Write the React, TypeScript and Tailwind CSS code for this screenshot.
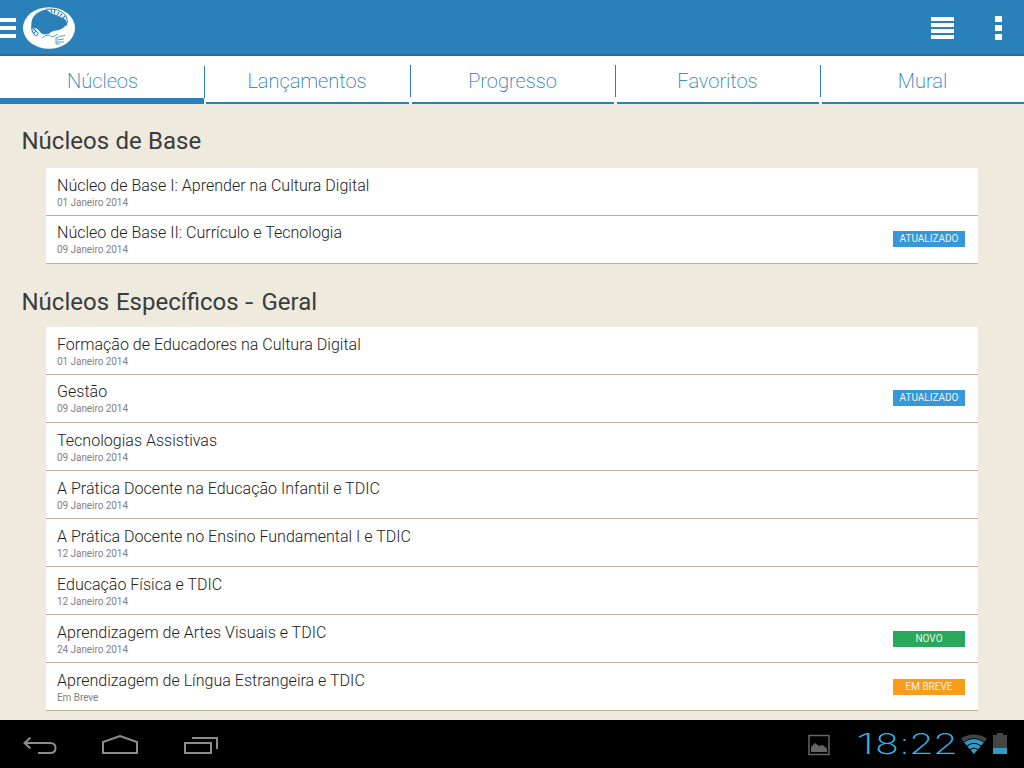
import React from 'react';

type Row = {
  title: string;
  date: string;
  pad?: string;
  badge?: { label: string; style: string };
};

const ATUALIZADO = { label: 'ATUALIZADO', style: 'mt-[15px] bg-[#3498db]' };

const base: Row[] = [
  { title: 'Núcleo de Base I: Aprender na Cultura Digital', date: '01 Janeiro 2014' },
  { title: 'Núcleo de Base II: Currículo e Tecnologia', date: '09 Janeiro 2014', pad: 'pt-[6px]', badge: ATUALIZADO },
];

const geral: Row[] = [
  { title: 'Formação de Educadores na Cultura Digital', date: '01 Janeiro 2014' },
  { title: 'Gestão', date: '09 Janeiro 2014', pad: 'pt-[6px]', badge: ATUALIZADO },
  { title: 'Tecnologias Assistivas', date: '09 Janeiro 2014' },
  { title: 'A Prática Docente na Educação Infantil e TDIC', date: '09 Janeiro 2014' },
  { title: 'A Prática Docente no Ensino Fundamental I e TDIC', date: '12 Janeiro 2014' },
  { title: 'Educação Física e TDIC', date: '12 Janeiro 2014' },
  { title: 'Aprendizagem de Artes Visuais e TDIC', date: '24 Janeiro 2014', badge: { label: 'NOVO', style: 'mt-[16px] bg-[#27a85b]' } },
  { title: 'Aprendizagem de Língua Estrangeira e TDIC', date: 'Em Breve', badge: { label: 'EM BREVE', style: 'mt-[16px] bg-[#f89c1c]' } },
];

const tabs = ['Núcleos', 'Lançamentos', 'Progresso', 'Favoritos', 'Mural'];
const tabWidths = ['w-[204px]', 'w-[203px]', 'w-[202px]', 'w-[202px]', 'w-[202px]'];

function Logo() {
  return (
    <svg className="mt-px ml-[7px] h-[42px] w-[53px]" viewBox="23 7 53 42">
      <ellipse cx="49" cy="28" rx="26" ry="20.800" fill="#fff" />
      <path d="M46 9.500 Q38 11 34 16 Q30.500 21 31.500 28 Q36 27 39.500 31 Q41 34.500 46 34.500 Q49 34 51 32 Q54 30.500 59 30 Q65 28 67 23 Q66 18 60 17 Q57 14.500 53 14 Q49 11.500 46 9.500Z" fill="#2a80b9" />
      <path d="M46 9.300 Q59 7.500 66 16 Q69 21 66 26" fill="none" stroke="#2a80b9" strokeWidth="1" />
      <path d="M51 9.500l1 3M55 10l-1 3.500M59 12l-1.500 3M62 13.500l-2 3M65 16l-2 2M31.500 27l1 5 4 3M33 28l3 3" stroke="#2a80b9" strokeWidth="1.200" fill="none" />
      <circle cx="36" cy="33.500" r="2" fill="#fff" stroke="#2a80b9" />
      <path d="M42 38 Q45 35 49 35 Q51 38 55 36 L58 34 M56 38 Q59 36 65 35.500M57 40 L64 39M56 42 L64 42M56 37.500 L56 44 L60 44" stroke="#2a80b9" strokeWidth=".75" fill="none" />
    </svg>
  );
}

function Section({ heading, rows, headClass }: { heading: React.ReactNode; rows: Row[]; headClass: string }) {
  return (
    <section>
      <h2 className={`pl-[21.500px] text-[24px] leading-[30px] text-[#3a3c3e] ${headClass}`}>{heading}</h2>
      <ul className="ml-[46px] w-[932px] bg-white">
        {rows.map((r) => (
          <li key={r.title} className="flex h-[48px] items-start justify-between border-b border-[#b6b09c] pr-[13px] pl-[11px]">
            <div className={r.pad ?? 'pt-[7px]'}>
              <p className="text-[16px] leading-[22px] font-light tracking-[0.02px] text-[#222]">{r.title}</p>
              <p className="text-[10px] leading-[12px] tracking-[-0.06px] text-[#808284]">{r.date}</p>
            </div>
            {r.badge && (
              <span className={`h-[16px] w-[72px] text-center text-[10px] leading-[15px] text-[#f1f0e4] ${r.badge.style}`}>
                {r.badge.label}
              </span>
            )}
          </li>
        ))}
      </ul>
    </section>
  );
}

export default function App() {
  return (
    <div className="flex h-[768px] w-[1024px] flex-col overflow-hidden bg-[#eeeade] font-['Roboto',sans-serif]">
      <header className="flex h-[56px] shrink-0 items-center border-b-2 border-[#246b9b] bg-[#2a80b9]">
        <div className="mt-[2px] flex w-[16px] flex-col gap-[4px]">
          <i className="h-[4px] bg-white" />
          <i className="h-[4px] bg-white" />
          <i className="h-[4px] bg-white" />
        </div>
        <Logo />
        <div className="mt-[2px] ml-auto flex w-[23px] flex-col gap-[2px]">
          <i className="h-[4px] bg-white" />
          <i className="h-[4px] bg-white" />
          <i className="h-[4px] bg-white" />
          <i className="h-[4px] bg-white" />
        </div>
        <div className="mt-[2px] mr-[22px] ml-[41px] flex w-[7px] flex-col gap-[3px]">
          <i className="h-[6px] bg-white" />
          <i className="h-[6px] bg-white" />
          <i className="h-[6px] bg-white" />
        </div>
      </header>

      <nav className="flex h-[48px] shrink-0 bg-white text-[20px] font-extralight text-[#1675b5]">
        {tabs.map((t, i) => (
          <React.Fragment key={t}>
            {i > 0 && (
              <div className={`flex shrink-0 ${i === 1 ? 'w-[2px] pt-[10px]' : 'w-[3px] pt-[9px] pl-px'}`}>
                <div className="h-[32px] w-px bg-[#2a80b9]" />
              </div>
            )}
            <div className={`flex h-full shrink-0 justify-center border-[#2a80b9] pt-[10px] leading-[30px] ${tabWidths[i]} ${i === 0 ? 'border-b-6 pl-px' : 'border-b-2 pr-px'}`}>
              {t}
            </div>
          </React.Fragment>
        ))}
      </nav>

      <main className="h-[616px] shrink-0 overflow-hidden">
        <Section heading="Núcleos de Base" rows={base} headClass="pt-[22px] pb-[12px] [word-spacing:0.4px]" />
        <Section
          heading={<>Núcleos Específicos <span className="mr-[2.500px] inline-block origin-left scale-x-125">-</span> Geral</>}
          rows={geral}
          headClass="pt-[23px] pb-[10px] [word-spacing:0.9px]"
        />
      </main>

      <footer className="flex h-[48px] shrink-0 items-center bg-black">
        <svg className="h-[48px] w-[240px]" viewBox="0 0 240 48" fill="none" stroke="#8c8c8c" strokeWidth="2">
          <path d="M30.500 17.500 L24.500 23 L30.500 28.500M25 23 H50 Q55.500 23 55.500 28 T50 33 H38" />
          <path d="M103 33 V22 L120 16 L137 22 V33Z" />
          <path d="M185 23h26v10h-26zM192 18h25v11" />
        </svg>
        <svg className="ml-auto h-[48px] w-[234px]" viewBox="790 0 234 48">
          <path d="M809 15.500h20v19h-20z" fill="none" stroke="#666" strokeWidth="1.500" />
          <path d="M811 32v-5l4-4 4 3 4-1 4 4v3z" fill="#666" />
          <g fontFamily="Inter" fontWeight="200" fontSize="28" fill="#33b5e5">
            <text x="856" y="34" textLength="18.500" lengthAdjust="spacingAndGlyphs">1</text>
            <text x="875" y="34" textLength="24" lengthAdjust="spacingAndGlyphs">8</text>
            <text x="900.500" y="34" textLength="8" lengthAdjust="spacingAndGlyphs">:</text>
            <text x="909" y="34" textLength="25" lengthAdjust="spacingAndGlyphs">2</text>
            <text x="933" y="34" textLength="25" lengthAdjust="spacingAndGlyphs">2</text>
          </g>
          <path d="M961 18.500 Q974 10.500 987 18.500 L974 34Z" fill="#444" />
          <path d="M963.500 21.500 Q974 14.500 984.500 21.500 L974 34Z" fill="#329ac4" />
          <path d="M964 22 Q974 15 984 22M967 26 Q974 20.500 981 26M970 29.500 Q974 26.500 978 29.500" fill="none" stroke="#000" strokeWidth="1" />
          <path d="M993 15h4v-2h6v2h4v13h-14z" fill="#444" />
          <path d="M993 28h14v6h-14z" fill="#329ac4" />
        </svg>
      </footer>
    </div>
  );
}
